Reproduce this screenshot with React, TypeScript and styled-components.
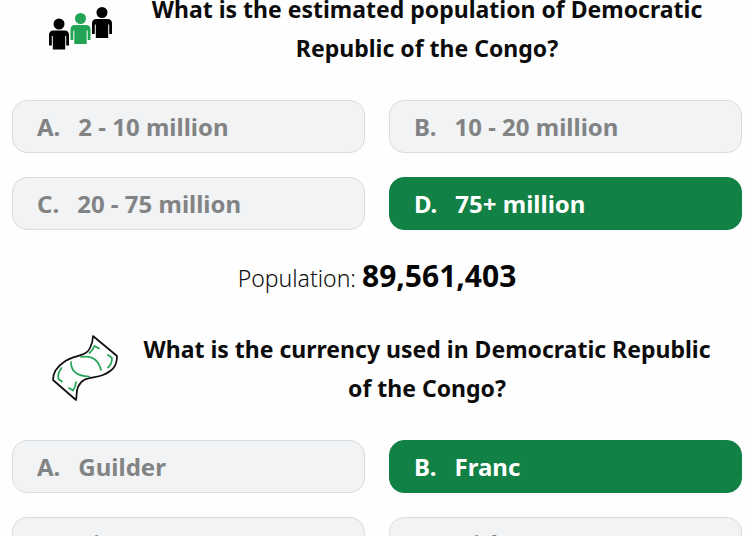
import React from "react";
import styled, { createGlobalStyle } from "styled-components";

const GlobalStyle = createGlobalStyle`
  * { box-sizing: border-box; }
  html { scrollbar-width: none; background: #fefefe; }
  body {
    margin: 0;
    font-family: "Noto Sans", "Open Sans", sans-serif;
    color: #0c0c0c;
  }
`;

const Quiz = styled.main`
  margin-top: -10px;
  padding: 0 8px 24px 12px;
`;

const QuestionHeader = styled.header`
  display: flex;
  gap: 20px;
  padding: 0 28px 0 36px;
`;

const IconSlot = styled.div`
  flex: none;
  display: flex;
  align-items: center;
  width: 72px;
`;

const QuestionTitle = styled.h2`
  flex: 1;
  margin: 0;
  font-size: 23px;
  line-height: 39px;
  font-weight: 700;
  text-align: center;
`;

const Options = styled.div`
  display: grid;
  grid-template-columns: 1fr 1fr;
  gap: 24px;
  margin-top: 32px;
`;

const OptionButton = styled.button<{ $correct?: boolean }>`
  display: flex;
  align-items: center;
  gap: 18px;
  height: 53px;
  padding: 0 24px;
  border: 1px solid ${(p) => (p.$correct ? "#128145" : "#d9dcde")};
  border-radius: 15px;
  background: ${(p) => (p.$correct ? "#128145" : "#f1f3f5")};
  color: ${(p) => (p.$correct ? "#ffffff" : "#828384")};
  font: inherit;
  font-size: 24px;
  font-weight: 700;
  text-align: left;
  cursor: pointer;
`;

const Fact = styled.p`
  margin: 24px 0 28px;
  font-size: 23px;
  line-height: 48px;
  font-weight: 300;
  text-align: center;
  color: #0c0c0c;
`;

const FactValue = styled.strong`
  font-size: 30px;
  line-height: 1;
  font-weight: 700;
  color: #050505;
`;

const PeopleIcon = () => (
  <svg width="72" height="50" viewBox="0 0 72 50" aria-hidden="true">
    <defs>
      <g id="person">
        <circle cx="10" cy="5.500" r="5.500" />
        <path d="M4.500 12H15.500Q20 12 20 16.500V27H17.200V17.500H16.200V31H3.800V17.500H2.800V27H0V16.500Q0 12 4.500 12Z" />
      </g>
    </defs>
    <use href="#person" x="1" y="14.500" />
    <use href="#person" x="22.500" y="9" fill="#23a455" />
    <use href="#person" x="44" y="3" />
  </svg>
);

const BanknoteIcon = () => (
  <svg width="72" height="72" viewBox="0 0 72 72" fill="none" strokeWidth="1.700" strokeLinecap="round" strokeLinejoin="round" aria-hidden="true">
    <path stroke="#120d10" d="M45 3L69 23C69 34 64 38 55 42C44 46 35 43 30 54C28 58 29 63 28 67L5 47C5 39 10 33 16 29C25 22 38 24 42 15C44 11 45 8 45 3Z" />
    <g stroke="#23a455">
      <path d="M41.500 20Q45 17 46.500 13L51 15.500" />
      <path d="M60 22L64 25Q64 31 60 34.500" />
      <path d="M13.500 35Q9 41 10.500 46L14 48.500" />
      <path d="M21 55L25 57.500Q28 53 28 49" />
      <path d="M33 24Q49 21 53 37" />
      <path d="M23 29Q23 43 41 43.500" />
    </g>
  </svg>
);

type Choice = { letter: string; text: string; correct?: boolean };

type QuestionProps = { icon: React.ReactNode; title: string; choices: Choice[] };

const Question = ({ icon, title, choices }: QuestionProps) => (
  <section>
    <QuestionHeader>
      <IconSlot>{icon}</IconSlot>
      <QuestionTitle>{title}</QuestionTitle>
    </QuestionHeader>
    <Options>
      {choices.map((c) => (
        <OptionButton key={c.letter} type="button" $correct={c.correct}>
          <span>{c.letter}.</span>
          <span>{c.text}</span>
        </OptionButton>
      ))}
    </Options>
  </section>
);

export default function App() {
  return (
    <>
      <GlobalStyle />
      <Quiz>
        <Question
          icon={<PeopleIcon />}
          title="What is the estimated population of Democratic Republic of the Congo?"
          choices={[
            { letter: "A", text: "2 - 10 million" },
            { letter: "B", text: "10 - 20 million" },
            { letter: "C", text: "20 - 75 million" },
            { letter: "D", text: "75+ million", correct: true },
          ]}
        />
        <Fact>
          Population: <FactValue>89,561,403</FactValue>
        </Fact>
        <Question
          icon={<BanknoteIcon />}
          title="What is the currency used in Democratic Republic of the Congo?"
          choices={[
            { letter: "A", text: "Guilder" },
            { letter: "B", text: "Franc", correct: true },
            { letter: "C", text: "Kina" },
            { letter: "D", text: "Dirham" },
          ]}
        />
      </Quiz>
    </>
  );
}
